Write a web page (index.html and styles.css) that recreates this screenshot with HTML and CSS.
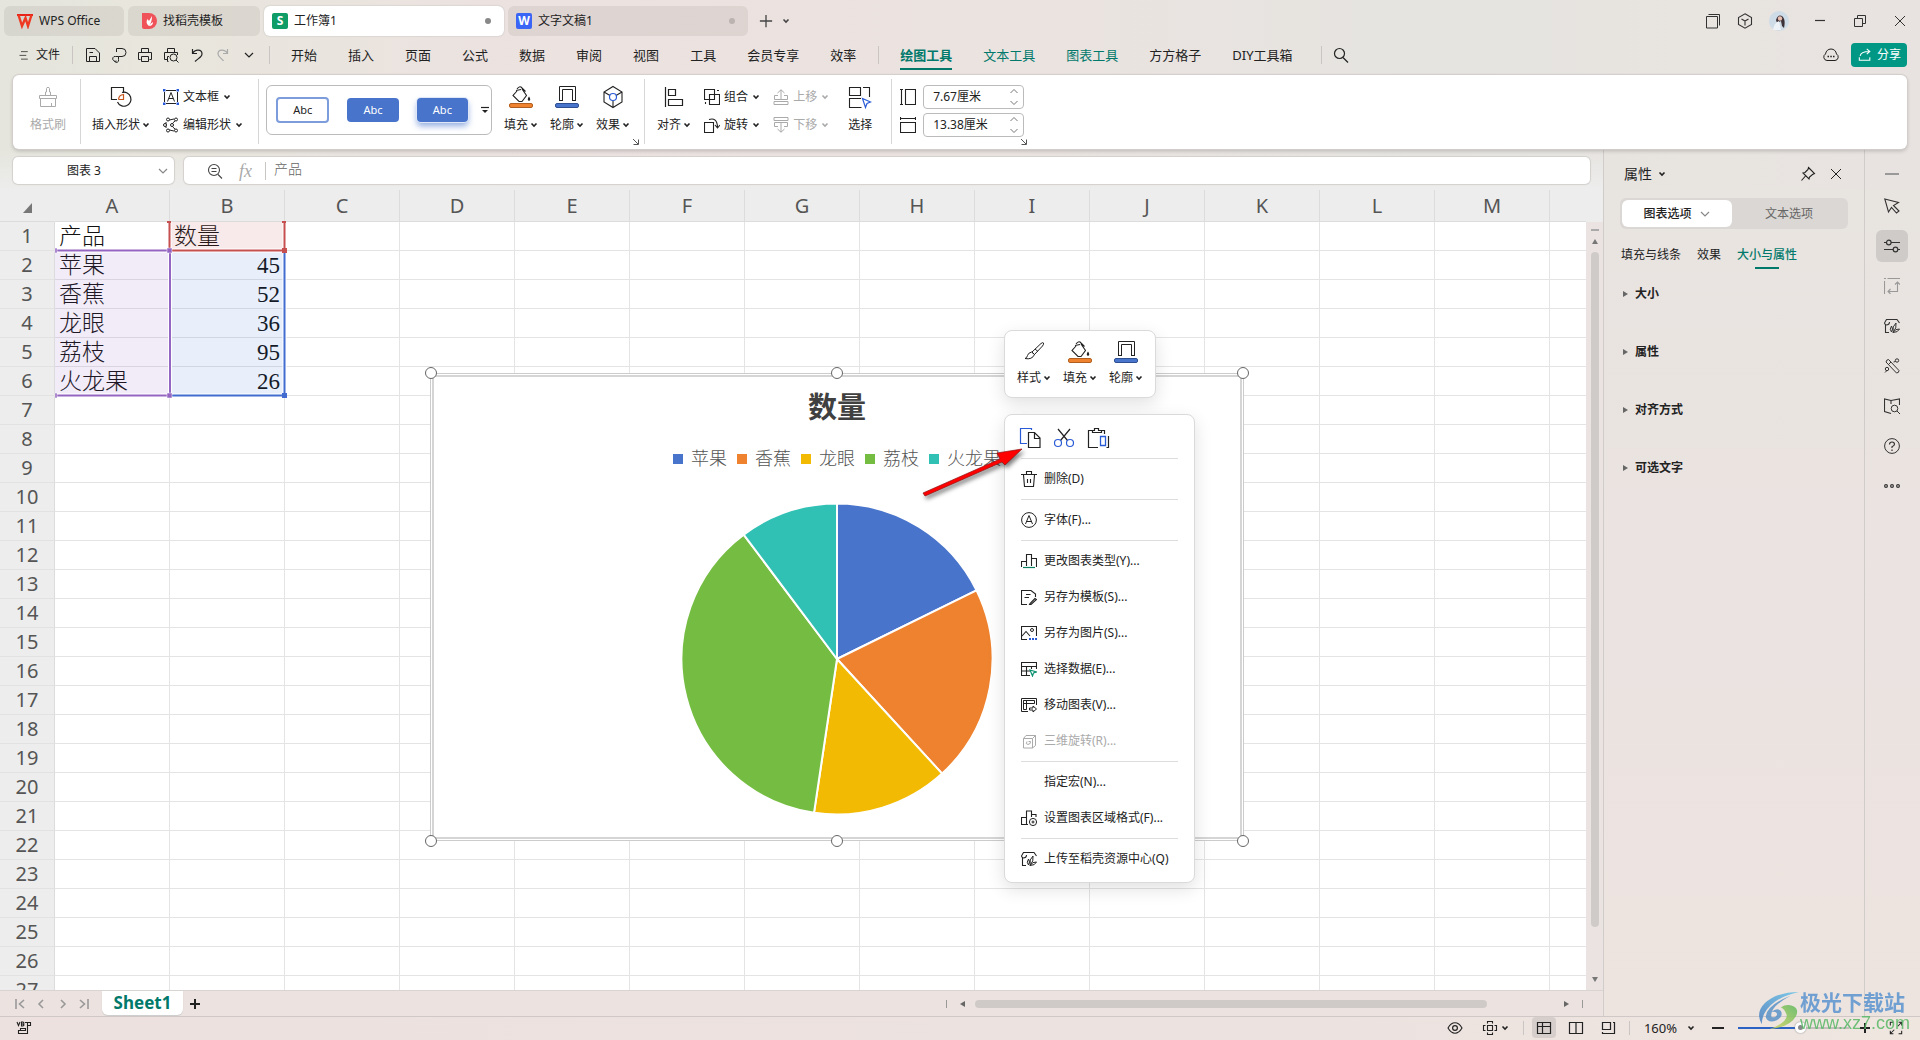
FILE: index.html
```html
<!DOCTYPE html>
<html lang="zh-CN">
<head>
<meta charset="utf-8">
<title>工作簿1 - WPS Office</title>
<link rel="stylesheet" href="styles.css">
</head>
<body>
<svg class="sprite" aria-hidden="true">
  <symbol id="chev" viewBox="0 0 8 8"><path d="M1.5 2.5L4 5L6.500 2.500" fill="none" stroke="currentColor" stroke-width="1.600"/></symbol>
  <symbol id="chev-thin" viewBox="0 0 12 12"><path d="M2 4L6 8L10 4" fill="none" stroke="currentColor" stroke-width="1.200"/></symbol>
  <symbol id="corner" viewBox="0 0 8 8"><path d="M1 1L6 6M6.500 1.500V6.500H1.500" fill="none" stroke="currentColor"/></symbol>
  <symbol id="ham" viewBox="0 0 12 16"><path d="M2 3.500H11M0 8.500H9M2 13.500H11" fill="none" stroke="currentColor"/></symbol>
  <symbol id="save" viewBox="0 0 16 16"><path d="M1.500 1.500H10L14.500 6V14.500H1.500ZM4.500 14V9.500H11.500V14M4.500 5.500H8" fill="none" stroke="currentColor"/></symbol>
  <symbol id="export" viewBox="0 0 16 16"><path d="M5.500 5V1.500H11a3.500 3.500 0 0 1 0 8H7.500V12.500a2 2 0 0 1-4 1.500M7.500 9.500H4.500a2.300 2.300 0 0 0-2 4Q4 15 5.500 14" fill="none" stroke="currentColor"/></symbol>
  <symbol id="print" viewBox="0 0 16 16"><path d="M4.500 5V1.500H11.500V5M3.500 12.500H1.500V5.500H14.500V12.500H12.500M4.500 9.500H11.500V14.500H4.500Z" fill="none" stroke="currentColor"/></symbol>
  <symbol id="preview" viewBox="0 0 16 16"><path d="M4.500 5V1.500H11.500V5M5 12.500H1.500V5.500H14.500V8M5.500 14.500H4.500V9.500H6" fill="none" stroke="currentColor"/><circle cx="10.500" cy="10.500" r="3.500" fill="none" stroke="currentColor"/><path d="M13 13L15.500 15.500" stroke="currentColor"/></symbol>
  <symbol id="undo" viewBox="0 0 16 16"><path d="M3.500 2V6.500H8M3.500 6.500C6 2 13 2 13 7C13 10 9 11.500 6 14.500" fill="none" stroke="currentColor" stroke-width="1.200"/></symbol>
  <symbol id="redo" viewBox="0 0 16 16"><path d="M12.500 2V6.500H8M12.500 6.500C10 2 3 2 3 7C3 10 7 11.500 8.500 14" fill="none" stroke="currentColor" stroke-width="1.200"/></symbol>
  <symbol id="search" viewBox="0 0 16 16"><circle cx="6.500" cy="6.500" r="5" fill="none" stroke="currentColor" stroke-width="1.200"/><path d="M10 10.500L15 15.500" stroke="currentColor" stroke-width="1.200"/></symbol>
  <symbol id="cloud" viewBox="0 0 16 16"><path d="M4 13.500a3.500 3.500 0 0 1-1.500-6.500C3 4 5 2 8 2s5 2 5.500 5a3.500 3.500 0 0 1-1.500 6.500Z" fill="none" stroke="currentColor"/><path d="M4.500 9.500H6M7.300 9.500H8.800M10 9.500H11.500" stroke="currentColor" stroke-width="1.500"/></symbol>
  <symbol id="share" viewBox="0 0 16 16"><path d="M2.500 9C3 5 7 4 13 4M10 1L13.500 4L10 7M1.500 10.500V14H13.500V10.500" fill="none" stroke="currentColor" stroke-width="1.200"/></symbol>
  <symbol id="windows" viewBox="0 0 16 16"><path d="M1.500 3.500H12.500V15H1.500ZM3.500 1.500H14.500V12.500" fill="none" stroke="currentColor"/></symbol>
  <symbol id="cube" viewBox="0 0 16 16"><path d="M8 .8L14.500 4.500V11.500L8 15.200L1.500 11.500V4.500ZM4.500 6L8 8L11.500 6M8 8V12.500" fill="none" stroke="currentColor" stroke-width="1.100"/></symbol>
  <symbol id="min" viewBox="0 0 16 16"><path d="M3 7.500H13" stroke="currentColor" stroke-width="1.200"/></symbol>
  <symbol id="restore" viewBox="0 0 16 16"><path d="M2.500 5.500H10.500V13.500H2.500ZM5.500 5.500V2.500H13.500V10.500H10.500" fill="none" stroke="currentColor"/></symbol>
  <symbol id="close" viewBox="0 0 16 16"><path d="M3 3L13 13M13 3L3 13" stroke="currentColor"/></symbol>
  <symbol id="plus" viewBox="0 0 16 16"><path d="M1 8H15M8 1V15" stroke="currentColor" stroke-width="1.500"/></symbol>
  <symbol id="brush" viewBox="0 0 24 24"><path d="M3.500 10.500H20.500V13.500H3.500ZM4.500 13.500V21.500H19.500V13.500M9.500 10V7H10.500V3.500C10.500 2 13.500 2 13.500 3.500V7H14.500V10M15.500 21V18" fill="none" stroke="currentColor"/></symbol>
  <symbol id="shapes" viewBox="0 0 24 24"><path d="M14.500 8V2.500H2.500V14.500H8" fill="none" stroke="currentColor" stroke-width="1.200"/><path d="M13 7.500A7 7 0 1 1 8.500 17" fill="none" stroke="currentColor" stroke-width="1.200"/><path d="M9.500 14.500H14.500V9.500A5.500 5.500 0 0 0 9.500 14.500" fill="none" stroke="#c8551c" stroke-width="1.200"/></symbol>
  <symbol id="textbox" viewBox="0 0 16 16"><path d="M3 1.500H13M3 14.500H13M1.500 3V13M14.500 3V13M4.500 12.500L8 3.500L11.500 12.500M5.800 9.500H10.200" fill="none" stroke="currentColor"/><path d="M0 0h2.500v2.500H0zM13.500 0H16v2.500h-2.500zM0 13.500h2.500V16H0zM13.500 13.500H16V16h-2.500z" fill="#2a5bd7"/></symbol>
  <symbol id="editshape" viewBox="0 0 16 16"><path d="M4 3.500L11 2M4 12.500L11 14M3 5V11M12 4Q9 6 9 8T12 12" fill="none" stroke="currentColor"/><g fill="#fff" stroke="currentColor"><circle cx="5" cy="2.500" r="1.500"/><circle cx="13" cy="2.500" r="1.500"/><circle cx="2" cy="8" r="1.500"/><circle cx="9" cy="8" r="1.500"/><circle cx="5" cy="13.500" r="1.500"/><circle cx="13" cy="13.500" r="1.500"/></g></symbol>
  <symbol id="fill" viewBox="0 0 24 24"><path d="M8 4Q10 1 12 2L16.500 6.500M7 5.500L12 4.500M8 6L4 10.500L10 16.500H13L17.500 10.500L13 4" fill="none" stroke="currentColor" stroke-width="1.100"/><path d="M20 11.500Q22.500 15 20 16Q17.500 15 20 11.500" fill="currentColor"/><rect x=".500" y="18.500" width="23" height="4" rx="1.500" fill="#ee822f" stroke="#b05f20"/></symbol>
  <symbol id="outline" viewBox="0 0 24 24"><path d="M4.500 15.500V1.500H20.500V15.500M7.500 15.500V4.500H17.500V15.500" fill="none" stroke="currentColor"/><path d="M4 15.500H8M17 15.500H21" stroke="currentColor"/><rect x=".500" y="18.500" width="23" height="4" rx="1.500" fill="#4874cb" stroke="#2f4f93"/></symbol>
  <symbol id="effect" viewBox="0 0 24 24"><path d="M12 1.500L21 7V17L12 22.500L3 17V7ZM3 7L9 10.500M21 7L15 10.500M12 16V22" fill="none" stroke="currentColor" stroke-width="1.100"/><circle cx="12" cy="12" r="3.500" fill="none" stroke="#2a5bd7" stroke-width="1.200"/></symbol>
  <symbol id="align" viewBox="0 0 24 24"><path d="M3.500 2V22M6.500 4.500H13.500V10.500H6.500ZM6.500 14.500H20.500V20.500H6.500Z" fill="none" stroke="currentColor" stroke-width="1.200"/></symbol>
  <symbol id="group" viewBox="0 0 16 16"><path d="M.500.500H10.500V10.500H.500ZM5.500 5.500H15.500V15.500H5.500ZM13 1.500H15M1.500 13V15" fill="none" stroke="currentColor" stroke-width="1.100"/></symbol>
  <symbol id="rotate" viewBox="0 0 16 16"><path d="M.500 5.500H9.500V15.500H.500ZM5 2.500Q13 0 13.500 10M11 8L13.500 11L16 8" fill="none" stroke="currentColor" stroke-width="1.100"/></symbol>
  <symbol id="up" viewBox="0 0 16 16"><path d="M8 11V.800M4.500 4L8 .800L11.500 4M5 6.500H1.500V10.500H14.500V6.500H11M1 12.500H15V15.500H1Z" fill="none" stroke="currentColor"/></symbol>
  <symbol id="down" viewBox="0 0 16 16"><path d="M8 5V15.200M4.500 12L8 15.200L11.500 12M5 9.500H1.500V5.500H14.500V9.500H11M1 .500H15V3.500H1Z" fill="none" stroke="currentColor"/></symbol>
  <symbol id="select" viewBox="0 0 24 24"><path d="M1.500 10.500V2.500H12.500V10.500ZM15 2.500H21.500V12M13 13.500H1.500V22.500H13.500" fill="none" stroke="currentColor" stroke-width="1.100"/><path d="M14.500 13.500L22.500 17L19 18.500L17.500 22.500Z" fill="#fff" stroke="#2a5bd7" stroke-width="1.200"/></symbol>
  <symbol id="height" viewBox="0 0 16 16"><path d="M1.500.500V15.500M0 .500H3M0 15.500H3M5.500.500H15.500V15.500H5.500Z" fill="none" stroke="currentColor" stroke-width="1.100"/></symbol>
  <symbol id="width" viewBox="0 0 16 16"><path d="M.500 1.500H15.500M.500 0V3M15.500 0V3M.500 5.500H15.500V15.500H.500Z" fill="none" stroke="currentColor" stroke-width="1.100"/></symbol>
  <symbol id="zoomout" viewBox="0 0 16 16"><circle cx="7" cy="7" r="5.500" fill="none" stroke="currentColor" stroke-width="1.100"/><path d="M4.500 5.500H9.500M4.500 8.500H9.500M11 11.500L15 15.500" stroke="currentColor" stroke-width="1.100"/></symbol>
  <symbol id="pen" viewBox="0 0 24 24"><path d="M10 12L19 3.500Q21 2 21.500 3T20.500 6L12.500 14.500ZM9.500 12Q6 13 5.500 15.500Q5 18 3 18.500Q10 20 12.500 14.500ZM13 9L16 11.500" fill="none" stroke="currentColor"/></symbol>
  <symbol id="copy" viewBox="0 0 24 24"><path d="M13.500 4V2.500H2.500V17.500H9" fill="none" stroke="#2a5bd7" stroke-width="1.200"/><path d="M10.500 6.500H16.500L22 12V21.500H10.500ZM16.500 6.500V12.500H22" fill="#fff" stroke="currentColor" stroke-width="1.200"/></symbol>
  <symbol id="cut" viewBox="0 0 24 24"><path d="M6 3L15.500 14.500M18 3L8.500 14.500" stroke="currentColor" stroke-width="1.200"/><g fill="none" stroke="#2a5bd7" stroke-width="1.200"><circle cx="6" cy="17" r="3.500"/><circle cx="18" cy="17" r="3.500"/></g></symbol>
  <symbol id="paste" viewBox="0 0 24 24"><path d="M6 4.500H2.500V21.500H12M16 4.500H18.500V8M6.500 6.500V4.500H8.500V2.500H12.500V4.500H15.500V6.500ZM20.500 21.500H22.500V10" fill="none" stroke="currentColor" stroke-width="1.200"/><path d="M14.500 10.500H19.500V19.500H14.500Z" fill="none" stroke="#2a5bd7" stroke-width="1.300"/></symbol>
  <symbol id="trash" viewBox="0 0 16 16"><path d="M0 3.500H16M5.500 3V.500H10.500V3M2.500 4L3.500 15.500H12.500L13.500 4M6.500 8V12M9.500 8V12" fill="none" stroke="currentColor" stroke-width="1.100"/></symbol>
  <symbol id="font" viewBox="0 0 16 16"><circle cx="8" cy="8" r="7.400" fill="none" stroke="currentColor"/><path d="M4.500 12L8 3.500L11.500 12M5.800 9.500H10.200" fill="none" stroke="currentColor"/></symbol>
  <symbol id="chart" viewBox="0 0 16 16"><path d="M.500 14V8.500H5.500M5.500 13V1.500H10.500V13M10.500 5.500H15.500V14" fill="none" stroke="currentColor" stroke-width="1.100"/><path d="M2 14.500H14" stroke="#0a7f62" stroke-width="1.200"/></symbol>
  <symbol id="template" viewBox="0 0 16 16"><path d="M6 15.500H.500V1.500H10L14.500 5V8M5 5.500H9.500M3.500 8.500H8M14 9.500L9 14.500L8.500 15.500L10 15.500L15.500 10.500Z" fill="none" stroke="currentColor" stroke-width="1.100"/></symbol>
  <symbol id="picture" viewBox="0 0 16 16"><path d="M15.500 11V1.500H.500V14.500H6M1 11L5 6.500L9 11" fill="none" stroke="currentColor" stroke-width="1.100"/><circle cx="11" cy="5" r="1.500" fill="none" stroke="currentColor"/><path d="M8 14H16" stroke="#2a5bd7" stroke-width="2" stroke-dasharray="2 1"/></symbol>
  <symbol id="seldata" viewBox="0 0 16 16"><path d="M15.500 8V1.500H.500V14.500H9M.500 5.500H15.500M.500 10H9M5.500 5.500V14.500M10.500 5.500V8" fill="none" stroke="currentColor" stroke-width="1.100"/><path d="M9 9L15.500 11L12.500 12L11.500 15Z" fill="none" stroke="#0a9070" stroke-width="1.200"/></symbol>
  <symbol id="move" viewBox="0 0 16 16"><path d="M15.500 8V1.500H.500V14.500H7M2.500 3.500H13.500V6.500H2.500ZM2.500 3.500V12.500H5.500V3.500M8.500 11H12V9L15.500 12L12 15V13H8.500Z" fill="none" stroke="currentColor"/></symbol>
  <symbol id="rot3d" viewBox="0 0 16 16"><path d="M2.500 5.500H11.500V15H2.500ZM2.500 5.500L5 2.500H14.500V12.500L11.500 15M11.500 5.500L14.500 2.500M6 8.500Q4 11 7 11.500Q10 11 9.500 8.500H7.500" fill="none" stroke="currentColor"/></symbol>
  <symbol id="chartset" viewBox="0 0 16 16"><path d="M7 14.500H.500V7.500H5.500V14.500M5.500 8V1H10.500V7M10.500 4.500H15V7" fill="none" stroke="currentColor" stroke-width="1.100"/><circle cx="12" cy="12" r="3.600" fill="none" stroke="currentColor"/><circle cx="12" cy="12" r="1" fill="none" stroke="currentColor"/></symbol>
  <symbol id="docer" viewBox="0 0 16 16"><path d="M5 14.500H1.500V6.500Q0 5.500 1 4L2.500 1.500H13L15.500 5M5.500 4Q5.500 7 2 7" fill="none" stroke="currentColor" stroke-width="1.100"/><path d="M7.500 14Q5 11.500 7.500 8Q9.500 11 7.500 14M9 13.500Q8 8.500 12 5Q13 10 9 14.500Q11.500 10.500 15.500 11Q14 14.500 9 14.500" fill="none" stroke="currentColor"/></symbol>
  <symbol id="pin" viewBox="0 0 16 16"><path d="M8.500 1.500L14.500 7.500L12.500 8.500L9.500 11L9 13L3 7L5 6.500L8 3.500ZM5.500 10L1.500 14.500" fill="none" stroke="currentColor" stroke-width="1.100"/></symbol>
  <symbol id="cursor" viewBox="0 0 16 16"><path d="M.800 1L14.500 4.500L9.500 7.500L15 13L12.500 15L7.500 9.500L4.500 14Z" fill="none" stroke="currentColor" stroke-width="1.100"/></symbol>
  <symbol id="sliders" viewBox="0 0 16 16"><path d="M0 4.500H2.500M7 4.500H16M0 11.500H9M14 11.500H16" stroke="currentColor" stroke-width="1.200"/><circle cx="4.800" cy="4.500" r="2.300" fill="none" stroke="currentColor" stroke-width="1.200"/><circle cx="11.500" cy="11.500" r="2.300" fill="none" stroke="currentColor" stroke-width="1.200"/></symbol>
  <symbol id="resize" viewBox="0 0 16 16"><path d="M0 .500H2M3.500.500H16M.500 3V16M13.500 4V13.500H4M11 6.500L13.500 4L16 6.500M6.500 11L4 13.500L6.500 16" fill="none" stroke="currentColor" stroke-width="1.100"/></symbol>
  <symbol id="tools" viewBox="0 0 16 16"><path d="M4.500 1.500L15 12.500Q15 15 12.500 15L2 4Q2.500 1.500 4.500 1.500M4.500 6.500L7 4" fill="none" stroke="currentColor"/><g fill="none" stroke="currentColor"><circle cx="13" cy="2.500" r="1.700"/><circle cx="3" cy="11" r="1.700"/></g><path d="M1 14.500L2.500 13M9.500 4L11.500 3.500" stroke="currentColor"/></symbol>
  <symbol id="book" viewBox="0 0 16 16"><path d="M7 2.500L.500 1V13.500L7 15.500M7 2.500L15.500 1V7M7 2.500V6" fill="none" stroke="currentColor" stroke-width="1.100"/><circle cx="10.500" cy="10.500" r="3.300" fill="none" stroke="currentColor"/><path d="M13 13L16 16" stroke="currentColor"/></symbol>
  <symbol id="help" viewBox="0 0 16 16"><circle cx="8" cy="8" r="7.400" fill="none" stroke="currentColor"/><path d="M5.500 6.500Q5.500 4 8 4T10.500 6.300Q10.500 7.500 8 8.700V10M8 11.500V13" fill="none" stroke="currentColor" stroke-width="1.200"/></symbol>
  <symbol id="more" viewBox="0 0 16 16"><g fill="none" stroke="currentColor" stroke-width="1.200"><circle cx="2" cy="8" r="1.400"/><circle cx="8" cy="8" r="1.400"/><circle cx="14" cy="8" r="1.400"/></g></symbol>
  <symbol id="first" viewBox="0 0 10 10"><path d="M1 0V10M9 1L4.500 5L9 9" fill="none" stroke="currentColor" stroke-width="1.600"/></symbol>
  <symbol id="prev" viewBox="0 0 10 10"><path d="M7 1L3 5L7 9" fill="none" stroke="currentColor" stroke-width="1.600"/></symbol>
  <symbol id="next" viewBox="0 0 10 10"><path d="M3 1L7 5L3 9" fill="none" stroke="currentColor" stroke-width="1.600"/></symbol>
  <symbol id="last" viewBox="0 0 10 10"><path d="M9 0V10M1 1L5.500 5L1 9" fill="none" stroke="currentColor" stroke-width="1.600"/></symbol>
  <symbol id="macro" viewBox="0 0 16 16"><path d="M1 2L2.500 5.500L4 2M5.500 6V2H7L8 3L7 4L8 5L7 6ZM5.500 4H7M9 2.500H14.500V5.500H11.500V13.500H2.500V10.500H9.500V8.500H4.500V10.500M11.500 2.500V5.500" fill="none" stroke="currentColor" stroke-width="1.100"/></symbol>
  <symbol id="eye" viewBox="0 0 16 16"><path d="M1 8Q4 2.800 8 2.800T15 8Q12 13.200 8 13.200T1 8Z" fill="none" stroke="currentColor" stroke-width="1.100"/><circle cx="8" cy="8" r="2.400" fill="none" stroke="currentColor" stroke-width="1.200"/></symbol>
  <symbol id="focus" viewBox="0 0 16 16"><path d="M5.500 5.500H10.500V10.500H5.500ZM5.500 3.500V1.500H10.500V3.500M5.500 12.500V14.500H10.500V12.500M3.500 5.500H1.500V10.500H3.500M12.500 5.500H14.500V10.500H12.500" fill="none" stroke="currentColor" stroke-width="1.100"/></symbol>
  <symbol id="view1" viewBox="0 0 16 16"><path d="M1.500 2.500H14.500V13.500H1.500ZM1.500 6.500H14.500M6.500 2.500V13.500" fill="none" stroke="currentColor" stroke-width="1.200"/></symbol>
  <symbol id="view2" viewBox="0 0 16 16"><path d="M1.500 2.500H14.500V13.500H1.500ZM8 2.500V13.500" fill="none" stroke="currentColor" stroke-width="1.200"/></symbol>
  <symbol id="view3" viewBox="0 0 16 16"><path d="M2.500 2.500H10.500V9.500H2.500ZM13 2.500H14.500V13.500H2.500V12" fill="none" stroke="currentColor" stroke-width="1.200"/></symbol>
  <symbol id="full" viewBox="0 0 16 16"><path d="M1.500 5V1.500H5M14.500 5V1.500H11M1.500 11V14.500H5M14.500 11V14.500H11M14 2L10 6M2 14L6 10" fill="none" stroke="currentColor" stroke-width="1.200"/></symbol>
</svg>

<header class="titlebar">
  <button class="wtab wtab-home"><svg class="i16" viewBox="0 0 16 16"><path d="M0 2H16" stroke="#e8231a" stroke-width="2"/><path d="M1.500 2L5 13L8.500 5L11 13L14.500 2" fill="none" stroke="#ee3a22" stroke-width="2.400"/></svg>WPS Office</button>
  <button class="wtab wtab-tpl"><svg class="i16" viewBox="0 0 16 16"><path d="M1 0H8a8 8 0 0 1 0 16H3a2 2 0 0 1-2-2Z" fill="#f0525a"/><path d="M8 13Q4 10 6.500 6L8 8L11 3Q11 9 8 13Q10 10 12 9Q12 13 8 13" fill="#fff"/></svg>找稻壳模板</button>
  <button class="wtab wtab-doc active"><span class="badge green">S</span>工作簿1<i class="dot"></i></button>
  <button class="wtab wtab-doc"><span class="badge blue">W</span>文字文稿1<i class="dot"></i></button>
  <div class="newtab"><button aria-label="新建"><svg class="i14"><use href="#plus"/></svg></button><button aria-label="标签列表"><svg class="i8"><use href="#chev"/></svg></button></div>
  <div class="wincontrols">
    <button aria-label="窗口"><svg class="i16"><use href="#windows"/></svg></button>
    <button aria-label="应用"><svg class="i16"><use href="#cube"/></svg></button>
    <button aria-label="账号"><svg class="i20" viewBox="0 0 20 20"><circle cx="10" cy="10" r="10" fill="#cddce6"/><path d="M7 9Q9 3 13 5Q17 8 15 17L13 15L12 10L8 12Z" fill="#3b3137"/><circle cx="11" cy="7.500" r="2.200" fill="#e6bfb2"/><path d="M4 19Q5 12 10 10L12 19Z" fill="#eef3f7"/></svg></button>
    <button aria-label="最小化" class="wide"><svg class="i16"><use href="#min"/></svg></button>
    <button aria-label="还原" class="wide"><svg class="i16"><use href="#restore"/></svg></button>
    <button aria-label="关闭" class="wide"><svg class="i16"><use href="#close"/></svg></button>
  </div>
</header>

<nav class="menubar">
  <button class="filebtn"><svg class="i12"><use href="#ham"/></svg>文件</button>
  <i class="vsep"></i>
  <div class="quick">
    <button aria-label="保存"><svg class="i16"><use href="#save"/></svg></button>
    <button aria-label="输出"><svg class="i16"><use href="#export"/></svg></button>
    <button aria-label="打印"><svg class="i16"><use href="#print"/></svg></button>
    <button aria-label="打印预览"><svg class="i16"><use href="#preview"/></svg></button>
    <button aria-label="撤销"><svg class="i16"><use href="#undo"/></svg></button>
    <button aria-label="恢复" class="off"><svg class="i16"><use href="#redo"/></svg></button>
    <button aria-label="更多"><svg class="i16" viewBox="0 0 16 16"><path d="M4 6L8 10L12 6" fill="none" stroke="currentColor" stroke-width="1.200"/></svg></button>
  </div>
  <i class="vsep"></i>
  <div class="tabs">
    <button>开始</button><button>插入</button><button>页面</button><button>公式</button><button>数据</button><button>审阅</button><button>视图</button><button>工具</button><button>会员专享</button><button>效率</button>
  </div>
  <i class="vsep loose"></i>
  <div class="tabs">
    <button class="teal current">绘图工具</button><button class="teal">文本工具</button><button class="teal">图表工具</button><button>方方格子</button><button>DIY工具箱</button>
  </div>
  <i class="vsep find"></i>
  <button aria-label="搜索"><svg class="i16"><use href="#search"/></svg></button>
  <div class="share-area"><button aria-label="云状态"><svg class="i16"><use href="#cloud"/></svg></button><button class="share"><svg class="i14"><use href="#share"/></svg>分享</button></div>
</nav>

<section class="ribbon">
  <div class="rg first"><button class="big off"><svg class="i24"><use href="#brush"/></svg><span>格式刷</span></button></div>
  <div class="rg insert">
    <button class="big"><svg class="i24"><use href="#shapes"/></svg><span>插入形状<svg class="i8"><use href="#chev"/></svg></span></button>
    <div class="stack">
      <button class="small"><svg class="i16"><use href="#textbox"/></svg>文本框<svg class="i8"><use href="#chev"/></svg></button>
      <button class="small"><svg class="i16"><use href="#editshape"/></svg>编辑形状<svg class="i8"><use href="#chev"/></svg></button>
    </div>
  </div>
  <div class="rg styles">
    <div class="gallery"><button class="sty plain">Abc</button><button class="sty solid">Abc</button><button class="sty raised">Abc</button><button class="galmore" aria-label="更多样式"><svg class="i8" viewBox="0 0 8 8"><path d="M0 1.500H8" stroke="currentColor" stroke-width="1.200"/><path d="M1 4H7L4 7Z" fill="currentColor"/></svg></button></div>
    <button class="big"><svg class="i24"><use href="#fill"/></svg><span>填充<svg class="i8"><use href="#chev"/></svg></span></button>
    <button class="big"><svg class="i24"><use href="#outline"/></svg><span>轮廓<svg class="i8"><use href="#chev"/></svg></span></button>
    <button class="big"><svg class="i24"><use href="#effect"/></svg><span>效果<svg class="i8"><use href="#chev"/></svg></span></button>
    <button class="launch" aria-label="样式设置"><svg class="i8"><use href="#corner"/></svg></button>
  </div>
  <div class="rg arrange">
    <button class="big"><svg class="i24"><use href="#align"/></svg><span>对齐<svg class="i8"><use href="#chev"/></svg></span></button>
    <div class="stack">
      <button class="small"><svg class="i16"><use href="#group"/></svg>组合<svg class="i8"><use href="#chev"/></svg></button>
      <button class="small"><svg class="i16"><use href="#rotate"/></svg>旋转<svg class="i8"><use href="#chev"/></svg></button>
    </div>
    <div class="stack">
      <button class="small off"><svg class="i16"><use href="#up"/></svg>上移<svg class="i8"><use href="#chev"/></svg></button>
      <button class="small off"><svg class="i16"><use href="#down"/></svg>下移<svg class="i8"><use href="#chev"/></svg></button>
    </div>
    <button class="big pick"><svg class="i24"><use href="#select"/></svg><span>选择</span></button>
  </div>
  <div class="rg size">
    <div class="sizes">
      <label class="sizerow"><svg class="i16"><use href="#height"/></svg><span class="spin"><input type="text" value="7.67厘米" aria-label="高度"><svg class="spinner" viewBox="0 0 12 22"><path d="M2.500 7L6 3.500L9.500 7M2.500 15L6 18.500L9.500 15" fill="none" stroke="#777"/></svg></span></label>
      <label class="sizerow"><svg class="i16"><use href="#width"/></svg><span class="spin"><input type="text" value="13.38厘米" aria-label="宽度"><svg class="spinner" viewBox="0 0 12 22"><path d="M2.500 7L6 3.500L9.500 7M2.500 15L6 18.500L9.500 15" fill="none" stroke="#777"/></svg></span></label>
    </div>
    <button class="launch" aria-label="大小设置"><svg class="i8"><use href="#corner"/></svg></button>
  </div>
</section>

<main class="work">
  <div class="book">
    <div class="fbar">
      <div class="namebox"><input type="text" value="图表 3" aria-label="名称框"><button aria-label="名称列表"><svg class="i12"><use href="#chev-thin"/></svg></button></div>
      <div class="formula"><svg class="i16"><use href="#zoomout"/></svg><span class="fx">fx</span><i class="vsep"></i><input type="text" value="产品" aria-label="编辑栏"></div>
    </div>

    <div class="sheetrow">
      <div class="sheet">
        <table class="grid"><thead><tr id="cols"></tr></thead><tbody id="rows"></tbody></table>

        <svg class="ranges" viewBox="0 0 290 215" aria-hidden="true">
          <rect x="55" y="61" width="114" height="144" fill="#8a4fbf" fill-opacity=".11"/>
          <rect x="170" y="32" width="114" height="28" fill="#c8504f" fill-opacity=".12"/>
          <rect x="170" y="61" width="114" height="144" fill="#3b6ad2" fill-opacity=".11"/>
          <g fill="none" stroke="#fff" stroke-width="4"><path d="M55 60.500H170V205.500H55M170 205.500H284.500V60.500M169.500 32V60.500H284.500V32"/></g>
          <g fill="none" stroke-width="2"><path d="M170 205.500H284.500V60.500" stroke="#426cd0"/><path d="M169.500 32V60.500H284.500V32" stroke="#c64f4f"/><path d="M55 60.500H170V205.500H55" stroke="#9466c2"/></g>
          <path d="M167 31h4v2h-4zM282 31h4v2h-4zM282 58h5v5h-5z" fill="#c64f4f"/><path d="M55 58h2v5h-2zM167 58h5v5h-5zM55 203h2v5h-2zM167 203h5v5h-5z" fill="#9466c2" stroke="#fff" stroke-width=".500"/><path d="M282 203h5v5h-5z" fill="#426cd0"/>
        </svg>

        <div class="chart">
          <h2>数量</h2>
          <ul class="legend"><li><i class="c1"></i>苹果</li><li><i class="c2"></i>香蕉</li><li><i class="c3"></i>龙眼</li><li><i class="c4"></i>荔枝</li><li><i class="c5"></i>火龙果</li></ul>
          <svg class="pie" viewBox="-156 -156 312 312" role="img" aria-label="数量饼图"><g stroke="#fff" stroke-width="2" stroke-linejoin="round">
            <path d="M0 0V-155.500A155.500 155.500 0 0 1 139.500 -68.700Z" fill="#4874cb"/>
            <path d="M0 0L139.500 -68.700A155.500 155.500 0 0 1 105.100 114.600Z" fill="#ee822f"/>
            <path d="M0 0L105.100 114.600A155.500 155.500 0 0 1 -23 153.800Z" fill="#f2ba02"/>
            <path d="M0 0L-23 153.800A155.500 155.500 0 0 1 -93.300 -124.400Z" fill="#75bd42"/>
            <path d="M0 0L-93.300 -124.400A155.500 155.500 0 0 1 0 -155.500Z" fill="#30c0b4"/></g></svg>
          <i class="h tl"></i><i class="h tc"></i><i class="h tr"></i><i class="h bl"></i><i class="h bc"></i><i class="h br"></i>
        </div>

        <div class="minibar">
          <button class="big"><svg class="i24"><use href="#pen"/></svg><span>样式<svg class="i8"><use href="#chev"/></svg></span></button>
          <button class="big"><svg class="i24"><use href="#fill"/></svg><span>填充<svg class="i8"><use href="#chev"/></svg></span></button>
          <button class="big"><svg class="i24"><use href="#outline"/></svg><span>轮廓<svg class="i8"><use href="#chev"/></svg></span></button>
        </div>

        <div class="ctx" role="menu">
          <div class="clip"><button aria-label="复制"><svg class="i24"><use href="#copy"/></svg></button><button aria-label="剪切"><svg class="i24"><use href="#cut"/></svg></button><button aria-label="粘贴"><svg class="i24"><use href="#paste"/></svg></button></div>
          <hr>
          <button role="menuitem"><svg class="i16"><use href="#trash"/></svg>删除(D)</button>
          <hr>
          <button role="menuitem"><svg class="i16"><use href="#font"/></svg>字体(F)...</button>
          <hr>
          <button role="menuitem"><svg class="i16"><use href="#chart"/></svg>更改图表类型(Y)...</button>
          <button role="menuitem"><svg class="i16"><use href="#template"/></svg>另存为模板(S)...</button>
          <button role="menuitem"><svg class="i16"><use href="#picture"/></svg>另存为图片(S)...</button>
          <button role="menuitem"><svg class="i16"><use href="#seldata"/></svg>选择数据(E)...</button>
          <button role="menuitem"><svg class="i16"><use href="#move"/></svg>移动图表(V)...</button>
          <button role="menuitem" class="off"><svg class="i16"><use href="#rot3d"/></svg>三维旋转(R)...</button>
          <hr>
          <button role="menuitem"><svg class="i16"></svg>指定宏(N)...</button>
          <button role="menuitem"><svg class="i16"><use href="#chartset"/></svg>设置图表区域格式(F)...</button>
          <hr>
          <button role="menuitem"><svg class="i16"><use href="#docer"/></svg>上传至稻壳资源中心(Q)</button>
        </div>

        <svg class="arrow" viewBox="0 0 110 60" aria-hidden="true"><path d="M3 48L80 14L77 8L102 4L85 20L82 17L5 51Z" fill="#fe0000" stroke="#8f1010" stroke-width=".700"/></svg>
      </div>
      <div class="vscroll" aria-hidden="true"><i class="split"></i><i class="tri up"></i><i class="thumb"></i><i class="tri down"></i></div>
    </div>

    <div class="sheettabs">
      <div class="navs"><button aria-label="首个"><svg class="i10"><use href="#first"/></svg></button><button aria-label="上一个"><svg class="i10"><use href="#prev"/></svg></button><button aria-label="下一个"><svg class="i10"><use href="#next"/></svg></button><button aria-label="末个"><svg class="i10"><use href="#last"/></svg></button></div>
      <button class="stab">Sheet1</button>
      <button class="addsheet" aria-label="新建工作表"><svg class="i10" viewBox="0 0 10 10"><path d="M0 5H10M5 0V10" stroke="currentColor" stroke-width="2"/></svg></button>
      <div class="hscroll" aria-hidden="true"><i class="bar"></i><i class="tri left"></i><i class="track"><i></i></i><i class="tri right"></i><i class="bar"></i></div>
    </div>
  </div>

  <aside class="panel">
    <div class="phead"><h3>属性<svg class="i8"><use href="#chev"/></svg></h3><button aria-label="固定"><svg class="i16"><use href="#pin"/></svg></button><button aria-label="关闭"><svg class="i16"><use href="#close"/></svg></button></div>
    <div class="toggle"><button class="on">图表选项<svg class="i12"><use href="#chev-thin"/></svg></button><button>文本选项</button></div>
    <div class="ptabs"><button>填充与线条</button><button>效果</button><button class="on">大小与属性</button></div>
    <div class="sections"><button><i class="tri right"></i>大小</button><button><i class="tri right"></i>属性</button><button><i class="tri right"></i>对齐方式</button><button><i class="tri right"></i>可选文字</button></div>
  </aside>

  <aside class="side">
    <button aria-label="收起" class="faint collapse"><svg class="i16" viewBox="0 0 16 16"><path d="M1 8H15" stroke="currentColor" stroke-width="2"/></svg></button>
    <button aria-label="选择"><svg class="i16"><use href="#cursor"/></svg></button>
    <button aria-label="属性" class="on"><svg class="i16"><use href="#sliders"/></svg></button>
    <button aria-label="尺寸" class="faint"><svg class="i16"><use href="#resize"/></svg></button>
    <button aria-label="稻壳"><svg class="i16"><use href="#docer"/></svg></button>
    <button aria-label="工具"><svg class="i16"><use href="#tools"/></svg></button>
    <button aria-label="查阅"><svg class="i16"><use href="#book"/></svg></button>
    <button aria-label="帮助"><svg class="i16"><use href="#help"/></svg></button>
    <button aria-label="更多"><svg class="i16"><use href="#more"/></svg></button>
  </aside>
</main>

<footer class="status">
  <button aria-label="宏"><svg class="i16"><use href="#macro"/></svg></button>
  <div class="sright">
    <button aria-label="护眼"><svg class="i16"><use href="#eye"/></svg></button>
    <button aria-label="聚焦" class="focus"><svg class="i16"><use href="#focus"/></svg><svg class="i8"><use href="#chev"/></svg></button>
    <i class="vsep"></i>
    <div class="views"><button class="on" aria-label="普通视图"><svg class="i16"><use href="#view1"/></svg></button><button aria-label="分页预览"><svg class="i16"><use href="#view2"/></svg></button><button aria-label="页面布局"><svg class="i16"><use href="#view3"/></svg></button></div>
    <i class="vsep"></i>
    <button class="zoomval">160%<svg class="i8"><use href="#chev"/></svg></button>
    <button aria-label="缩小" class="zbtn"><svg class="i12" viewBox="0 0 12 12"><path d="M0 6H12" stroke="currentColor" stroke-width="2"/></svg></button>
    <input type="range" min="0" max="100" value="57" aria-label="缩放">
    <button aria-label="放大" class="zbtn"><svg class="i10" viewBox="0 0 10 10"><path d="M0 5H10M5 0V10" stroke="currentColor" stroke-width="2"/></svg></button>
    <button aria-label="全屏" class="zbtn fs"><svg class="i14"><use href="#full"/></svg></button>
  </div>
</footer>

<div class="site">
  <svg viewBox="0 0 44 40" aria-hidden="true"><defs><linearGradient id="gb" x1="0" y1="1" x2="1" y2="0"><stop offset="0" stop-color="#4a7fc0"/><stop offset="1" stop-color="#67c4ea"/></linearGradient><linearGradient id="gg" x1="0" y1="1" x2="1" y2="0"><stop offset="0" stop-color="#d6d660"/><stop offset="1" stop-color="#5cb85c"/></linearGradient></defs><path d="M43 0Q20 0 7 12Q-3 22 4 34Q4 20 18 10Q28 3 43 0Z" fill="url(#gb)"/><path d="M12 39Q31 32 30 24Q28 18 24 16Q30 12 37 15Q43 18 40 25Q34 37 12 39Z" fill="url(#gg)"/><path d="M34 4Q9 14 8 26Q10 33 19 30Q27 26 24 20Q20 16 14 21Q20 20 20 24Q18 28 14 26Q12 16 34 4Z" fill="#5b93c9"/></svg>
  <div><strong>极光下载站</strong><span>www.xz7.com</span></div>
</div>
<script src="script.js"></script>
</body>
</html>
```
FILE: styles.css
```css
* { box-sizing: border-box; }
html, body { height: 100%; margin: 0; }
body {
  display: flex; flex-direction: column; overflow: hidden;
  font: 12px/18px "Noto Sans", "Noto Sans CJK SC", sans-serif; color: #222;
  background:
    linear-gradient(90deg, #e5e5dd 0, #e8e6dd 8%, #ece2e0 28%, #ebe3e0 52%, #e5e4e0 75%, #e8e4e0 88%, #e8e3e0 100%) 0 0 / 100% 190px no-repeat,
    linear-gradient(180deg, #e8e4e0 190px, #ebe3e1 60%, #ede4df 100%);
}
button, input { font: inherit; color: inherit; background: none; border: 0; padding: 0; margin: 0; }
button { display: flex; align-items: center; white-space: nowrap; }
svg { display: block; flex: none; }
i { display: block; flex: none; }
ul, h2, h3 { margin: 0; padding: 0; font: inherit; list-style: none; }
.sprite { position: absolute; width: 0; height: 0; }
.i8 { width: 8px; height: 8px; }
.i10 { width: 10px; height: 10px; }
.i12 { width: 12px; height: 12px; }
.i14 { width: 14px; height: 14px; }
.i16 { width: 16px; height: 16px; }
.i20 { width: 20px; height: 20px; }
.i24 { width: 24px; height: 24px; }
.off { color: #aaa; }
.vsep { width: 1px; height: 18px; background: #c9c5c2; }
.tri { width: 0; height: 0; border: 3px solid transparent; }
.tri.up { border-bottom: 5px solid #777; border-top: 0; }
.tri.down { border-top: 5px solid #777; border-bottom: 0; }
.tri.left { border-right: 5px solid #666; border-left: 0; }
.tri.right { border-left: 5px solid #666; border-right: 0; }

/* title bar */
.titlebar { display: flex; align-items: center; gap: 4px; height: 37px; flex: none; padding: 5px 12px 0 4px; }
.wtab { height: 30px; gap: 6px; border-radius: 6px; background: rgba(110, 100, 95, .11); padding: 0 8px; }
.wtab-home, .wtab-tpl { padding-left: 13px; width: 120px; }
.wtab-tpl { width: 132px; }
.wtab-doc { width: 240px; padding-right: 13px; }
.wtab.active { background: #fff; box-shadow: 0 0 2px #bbb; }
.badge { width: 16px; height: 16px; border-radius: 2px; color: #fff; font: bold 12px/16px "Open Sans", sans-serif; text-align: center; }
.badge.green { background: #0f9c67; }
.badge.blue { background: #3b66f5; }
.dot { width: 6px; height: 6px; border-radius: 50%; background: #888; margin-left: auto; }
.wtab:not(.active) .dot { background: #bbb3b0; }
.newtab { display: flex; gap: 9px; padding-left: 7px; color: #444; }
.wincontrols { display: flex; align-items: center; gap: 16px; margin-left: auto; color: #333; }
.wincontrols .wide { margin-left: 8px; }
.wincontrols .wide:nth-child(4) { margin-left: 7px; }

/* menu row */
.menubar { display: flex; align-items: center; height: 38px; flex: none; padding: 0 13px 2px 18px; }
.filebtn { gap: 6px; margin-right: 12px; }
.quick { display: flex; gap: 10px; margin: 0 12px; }
.tabs { display: flex; gap: 31px; margin-left: 21px; font-size: 13px; }
.tabs button { height: 30px; border: solid transparent; border-width: 2px 0; }
.teal { color: #00796b; }
.tabs .current { font-weight: bold; border-bottom-color: #00796b; }
.vsep.loose { margin-left: 22px; }
.vsep.find { margin: 0 11px 0 28px; }
.share-area { display: flex; align-items: center; gap: 12px; margin-left: auto; }
.share { gap: 5px; width: 56px; height: 24px; padding-left: 7px; border-radius: 4px; background: #009885; color: #fff; }

/* ribbon */
.ribbon { position: relative; z-index: 1; display: flex; height: 74px; flex: none; margin: 0 13px; background: #fff; border-radius: 6px; box-shadow: 0 0 1px 1px #d3cecb, 0 2px 4px rgba(0, 0, 0, .2); }
.rg { position: relative; display: flex; padding: 10px 12px 0; }
.rg + .rg::before { content: ""; position: absolute; left: 0; top: 4px; bottom: 5px; width: 1px; background: #d6d6d6; }
.rg.first { padding: 10px 14px 0 17px; }
.rg.insert { gap: 13px; padding: 10px 15px 0 12px; }
.rg.styles { gap: 12px; padding: 10px 14px 0 8px; }
.rg.arrange { gap: 13px; padding: 10px 19px 0 13px; }
.rg.size { padding: 10px 0 0 9px; }
.big { flex-direction: column; gap: 7px; align-self: flex-start; }
.big span { display: flex; align-items: center; gap: 2px; }
.stack { display: flex; flex-direction: column; gap: 8px; padding-top: 2px; }
.small { height: 20px; gap: 4px; }
.pick { margin-left: 6px; }
.gallery { display: flex; align-items: center; gap: 18px; width: 226px; height: 50px; padding: 0 2px 0 9px; border: 1px solid #bbb; border-radius: 6px; }
.sty { width: 52px; height: 24px; justify-content: center; border-radius: 4px; font-size: 11px; }
.plain { width: 54px; height: 26px; border: 2px solid #7d9cdb; }
.solid { background: #4874cb; color: #fff; }
.raised { background: #4874cb; color: #fff; box-shadow: 0 0 0 1px #dfe7f6, 0 4px 6px rgba(72, 116, 203, .6); }
.galmore { margin-left: -5px; }
.launch { position: absolute; right: 4px; bottom: 3px; color: #555; }
.sizes { display: flex; flex-direction: column; gap: 4px; width: 124px; }
.rg.size .launch { right: -4px; }
.sizerow { display: flex; align-items: center; gap: 7px; }
.spin { display: flex; align-items: center; flex: 1; height: 24px; padding: 0 3px 0 9px; border: 1px solid #bbb; border-radius: 4px; }
.spin input { flex: 1; width: 0; }
.spinner { width: 12px; height: 22px; }

/* work area */
.work { display: flex; flex: 1; min-height: 0; }
.book { display: flex; flex-direction: column; flex: 1; min-width: 0; background: linear-gradient(180deg, rgba(237, 237, 237, 0) 0, #ededed 41px); }
.fbar { display: flex; gap: 10px; flex: none; padding: 8px 13px 6px; }
.namebox, .formula { display: flex; align-items: center; height: 27px; background: #fff; border-radius: 5px; box-shadow: 0 0 1px 1px #d3d0cd; }
.namebox { width: 161px; padding-right: 5px; color: #222; }
.namebox input { flex: 1; width: 0; text-align: center; padding-right: 16px; margin-left: 14px; }
.namebox svg { color: #888; }
.formula { flex: 1; padding-left: 23px; color: #444; }
.fx { font: italic 18px/20px "Liberation Serif", serif; color: #aaa; margin: 0 13px 0 16px; }
.formula input { flex: 1; margin-left: 8px; font-size: 14px; font-weight: 300; padding-bottom: 4px; color: #666; }

.sheetrow { display: flex; flex: 1; min-height: 0; }
.sheet { position: relative; flex: 1; min-width: 0; overflow: hidden; background: #fff; }
.grid { width: 100%; table-layout: fixed; border-collapse: separate; border-spacing: 0; }
.grid th { padding: 0; background: #ededed; color: #555; font-size: 20px; font-weight: 400; line-height: 26px; border: solid #dcdcdc; border-width: 0 1px 1px 0; }
.grid thead th { width: 115px; height: 32px; line-height: 30px; }
.grid thead th:first-child { width: 55px; border-color: #ededed #ededed #dcdcdc; }
.grid thead th:last-child { width: auto; border-right: 0; }
.grid tbody th { border-bottom-color: #e2e2e2; }
.corner { margin: 4px 0 0 23px; border: solid transparent; border-width: 10px 0 0 9px; width: 0; height: 0; border-bottom: 10px solid #777; border-top: 0; }
.grid td { height: 29px; padding: 2px 4px 0; overflow: hidden; border: solid #e4e4e4; border-width: 0 1px 1px 0; color: #111; font: 300 23px/26px "Liberation Serif", "Noto Sans CJK SC", serif; white-space: nowrap; }
.grid td:last-child { border-right: 0; }
.grid td.num { text-align: right; }
.ranges { position: absolute; left: 0; top: 0; width: 290px; height: 215px; }

.chart { position: absolute; left: 432px; top: 185px; width: 810px; height: 464px; display: flex; flex-direction: column; align-items: center; padding-top: 14px; background: #fff; border: 2px solid #d5d5d5; outline: 1px solid #ccc; outline-offset: 1px; box-shadow: 0 0 0 1px #fff; }
.chart h2 { font: bold 29px/34px "Liberation Serif", "Noto Sans CJK SC", serif; color: #404040; }
.legend { display: flex; gap: 10px; margin-top: 22px; font: 300 18px/24px "Liberation Serif", "Noto Sans CJK SC", serif; color: #555; }
.legend li { display: flex; align-items: center; gap: 8px; }
.legend i { width: 10px; height: 10px; }
.c1 { background: #4874cb; } .c2 { background: #ee822f; } .c3 { background: #f2ba02; } .c4 { background: #75bd42; } .c5 { background: #30c0b4; }
.pie { width: 312px; height: 312px; margin-top: 32px; }
.h { position: absolute; width: 12px; height: 12px; border: 1px solid #666; border-radius: 50%; background: #fff; }
.tl, .tc, .tr { top: -10px; }
.bl, .bc, .br { bottom: -10px; }
.tl, .bl { left: -9px; }
.tr, .br { right: -9px; }
.tc, .bc { left: calc(50% - 6px); }

.minibar, .ctx { position: absolute; left: 1004px; background: #fff; border: 1px solid #dadada; border-radius: 8px; box-shadow: 0 6px 18px rgba(0, 0, 0, .12); }
.minibar { top: 140px; display: flex; gap: 12px; padding: 9px 12px; height: 68px; }
.minibar .big { gap: 5px; }
.ctx { top: 224px; width: 191px; padding: 5px 16px; }
.ctx > button { width: 100%; height: 36px; gap: 7px; }
.ctx hr { height: 1px; border: 0; margin: 2px 0; background: #ddd; }
.clip { display: flex; align-items: center; gap: 10px; height: 36px; margin-left: -3px; }
.arrow { position: absolute; left: 920px; top: 255px; width: 110px; height: 60px; filter: drop-shadow(2px 3px 2px rgba(0, 0, 0, .5)); }

.vscroll { display: flex; flex-direction: column; align-items: center; gap: 8px; width: 17px; margin-top: 32px; padding: 7px 0 8px; background: #ebe3e1; }
.vscroll .split { width: 8px; height: 2px; background: #aaa; }
.vscroll .thumb { width: 8px; flex: 0 1 675px; border-radius: 4px; background: #cfcbc9; }
.vscroll .down { margin-top: auto; }

.sheettabs { display: flex; align-items: center; height: 26px; flex: none; border-top: 1px solid #d8d4d2; background: #ece2df; padding: 0 20px 0 15px; }
.navs { display: flex; gap: 11px; width: 87px; color: #999; }
.navs button:nth-child(3) { margin-left: 1px; }
.stab { align-self: flex-start; height: 24px; width: 81px; justify-content: center; background: #fff; border-radius: 0 0 6px 6px; box-shadow: 0 1px 1px #ccc; color: #00796b; font: bold 17px/22px "Noto Sans", sans-serif; }
.addsheet { margin-left: 7px; }
.hscroll { display: flex; align-items: center; width: 637px; margin-left: auto; }
.hscroll .bar { width: 1px; height: 8px; background: #999; }
.hscroll .left { margin: 0 10px 0 13px; }
.hscroll .right { margin-right: 13px; }
.track { flex: 1; height: 8px; }
.track i { width: 87%; height: 8px; border-radius: 4px; background: #cfcac8; }

/* property panel */
.panel { width: 261px; flex: none; border-left: 1px solid #d0ccc9; padding: 14px 16px 0; }
.phead { display: flex; align-items: center; gap: 12px; height: 22px; padding: 0 4px; }
.phead h3 { display: flex; align-items: center; gap: 6px; flex: 1; font-size: 14px; }
.toggle { display: flex; height: 31px; margin-top: 13px; padding: 2px; border-radius: 6px; background: #dbd7d4; color: #666; }
.toggle button { flex: 1 1 50%; justify-content: center; gap: 7px; }
.toggle .on { flex: none; width: 110px; border-radius: 6px; background: #fff; color: #222; font-weight: 500; }
.toggle .on svg { color: #888; }
.ptabs { display: flex; gap: 16px; height: 24px; margin: 17px 0 0 1px; }
.ptabs button { position: relative; height: 18px; }
.ptabs .on { color: #00796b; font-weight: 500; }
.ptabs .on::after { content: ""; position: absolute; left: 30%; right: 30%; bottom: -5px; height: 2px; background: #00796b; }
.sections { display: flex; flex-direction: column; gap: 40px; margin: 15px 0 0 3px; font-weight: bold; }
.sections button { height: 18px; gap: 7px; }
.side { display: flex; flex-direction: column; align-items: center; gap: 8px; width: 56px; flex: none; border-left: 1px solid #d0ccc9; padding: 9px 1px 0 0; color: #333; }
.side button { width: 32px; height: 32px; justify-content: center; border-radius: 6px; }
.side .collapse { margin-bottom: -8px; }
.side .on { background: #cfcbc8; }
.side .faint { color: #999; }

/* status bar */
.status { display: flex; align-items: center; justify-content: space-between; height: 24px; flex: none; padding: 0 17px 2px 16px; border-top: 1px solid #cfc8c6; background: linear-gradient(90deg, #ece1df, #ece2df 70%, #efe6e0); }
.sright { display: flex; align-items: center; height: 21px; }
.sright .vsep { height: 14px; }
.focus { gap: 3px; margin: 0 14px 0 19px; }
.views { display: flex; gap: 8px; height: 21px; margin: 0 9px 0 8px; }
.views button { width: 24px; justify-content: center; border-radius: 4px; }
.views .on { background: #d6cecb; }
.zoomval { gap: 10px; margin-left: 14px; font-size: 13px; }
.zbtn { margin-left: 17px; }
.sright input { appearance: none; width: 111px; height: 14px; margin: 0 -6px 0 14px; background: linear-gradient(90deg, #2b62c4 57%, #c4bfbd 57%) center / 100% 2px no-repeat; }
.sright input::-webkit-slider-thumb { appearance: none; width: 11px; height: 11px; border: 3px solid #fff; border-radius: 50%; background: #888; box-shadow: 0 0 2px #888; }
.fs { margin-left: 19px; }

/* site mark over the lower right corner */
.site { position: absolute; right: 10px; bottom: 8px; display: flex; align-items: center; opacity: .85; pointer-events: none; }
.site svg { width: 42px; height: 42px; }
.site strong { display: block; font-size: 21px; line-height: 24px; color: #5b93d0; }
.site span { display: block; font: 18px/18px "Liberation Sans", sans-serif; color: #58b866; }
```
FILE: script.js
```js
const letters = 'ABCDEFGHIJKLM'.split('');
const data = [['产品', '数量'], ['苹果', 45], ['香蕉', 52], ['龙眼', 36], ['荔枝', 95], ['火龙果', 26]];

document.getElementById('cols').innerHTML =
  '<th><div class="corner"></div></th>' + letters.map(l => `<th>${l}</th>`).join('') + '<th></th>';

let html = '';
for (let r = 0; r < 27; r++) {
  html += `<tr><th>${r + 1}</th>`;
  for (let c = 0; c <= letters.length; c++) {
    const v = data[r] && data[r][c] !== undefined ? data[r][c] : '';
    html += `<td${typeof v === 'number' ? ' class="num"' : ''}>${v}</td>`;
  }
  html += '</tr>';
}
document.getElementById('rows').innerHTML = html;
```
